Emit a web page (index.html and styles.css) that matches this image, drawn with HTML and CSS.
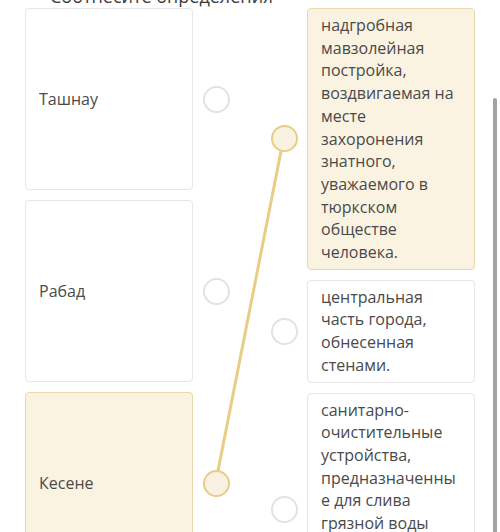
FILE: index.html
```html
<!DOCTYPE html>
<html lang="ru">
<head>
    <meta charset="UTF-8">
    <title>Соотнесите определения</title>
    <link rel="stylesheet" href="styles.css">
</head>
<body>
<div class="task">
    <h2 class="title">Соотнесите определения</h2>

    <div class="board">
        <!-- линия соединённой пары: Кесене -> надгробная постройка -->
        <svg class="links" width="500" height="532">
            <line x1="284" y1="137" x2="216" y2="482"></line>
        </svg>

        <div class="col">
            <div class="pair">
                <div class="card card-term">Ташнау</div>
                <span class="dot"></span>
            </div>
            <div class="pair">
                <div class="card card-term">Рабад</div>
                <span class="dot"></span>
            </div>
            <div class="pair">
                <div class="card card-term active">Кесене</div>
                <span class="dot active"></span>
            </div>
        </div>

        <div class="col col-right">
            <div class="pair">
                <span class="dot active"></span>
                <div class="card active">надгробная мавзолейная постройка, воздвигаемая на месте захоронения знатного, уважаемого в тюркском обществе человека.</div>
            </div>
            <div class="pair">
                <span class="dot"></span>
                <div class="card">центральная часть города, обнесенная стенами.</div>
            </div>
            <div class="pair">
                <span class="dot"></span>
                <div class="card card-long">санитарно-очистительные устройства, предназначенные для слива грязной воды</div>
            </div>
        </div>
    </div>

    <div class="scrollbar"></div>
</div>
</body>
</html>
```

FILE: styles.css
```css
html, body {
    margin: 0;
    height: 100%;
    overflow: hidden;
    background: #ffffff;
}

.task {
    position: relative;
    font-family: "Open Sans", "Noto Sans", sans-serif;
    color: #4a4a4a;
}

.title {
    margin: -15px 0 0 50px;
    font-size: 18px;
    font-weight: normal;
    line-height: 22px;
    color: #3c3c3c;
}

.board {
    position: relative;
    display: flex;
    gap: 41px;
    padding: 1px 0 0 25px;
}

.links {
    position: absolute;
    left: 0;
    top: -8px;
}

.links line {
    stroke: #e8cd86;
    stroke-width: 3;
    stroke-linecap: round;
}

.col {
    display: flex;
    flex-direction: column;
    gap: 10px;
}

.pair {
    display: flex;
    align-items: center;
    gap: 10px;
}

.col-right .pair {
    gap: 9px;
}

.card {
    box-sizing: border-box;
    width: 168px;
    padding: 5px 18px 5px 13px;
    border: 1px solid #e6e6e6;
    border-radius: 4px;
    background: #ffffff;
    font-size: 16px;
    line-height: 22.7px;
    overflow-wrap: break-word;
}

.card-term {
    display: flex;
    align-items: center;
    height: 182px;
    padding-top: 0;
    padding-bottom: 0;
}

.card-long {
    min-height: 234px;
}

.card.active {
    background: #fbf3e2;
    border-color: #ebd8ab;
}

.dot {
    position: relative;
    z-index: 1;
    box-sizing: border-box;
    flex: none;
    width: 27px;
    height: 27px;
    border: 2px solid #e2e2e2;
    border-radius: 50%;
    background: #ffffff;
}

.dot.active {
    border-color: #e8cd86;
    background: #f9f1e1;
}

.scrollbar {
    position: absolute;
    left: 493px;
    top: 113px;
    width: 4px;
    height: 500px;
    border-radius: 2px;
    background: #a3a3a3;
}
```
